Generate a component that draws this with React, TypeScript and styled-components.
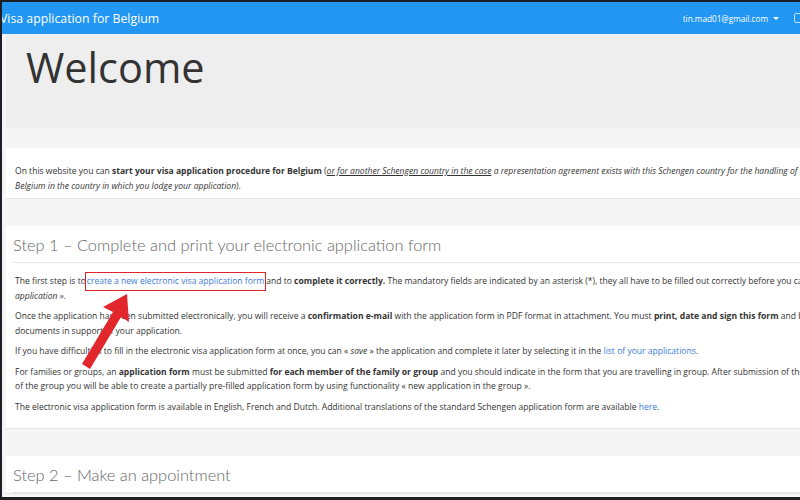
import styled, { createGlobalStyle } from 'styled-components';

const GlobalStyle = createGlobalStyle`
  html, body {
    margin: 0;
    padding: 0;
    overflow: hidden;
    background: #f5f5f5;
  }
  * {
    box-sizing: border-box;
  }
`;

const Frame = styled.div`
  position: relative;
  width: 800px;
  height: 500px;
  overflow: hidden;
  border-top: 2px solid #1d1f24;
  border-left: 2px solid #1d1f24;
  border-bottom: 3px solid #1d1f24;
  background: #f5f5f5;
  font-family: 'Open Sans', 'Liberation Sans', sans-serif;
`;

const NavBar = styled.header`
  height: 32px;
  background: #2196f3;
  display: flex;
  align-items: center;
  justify-content: space-between;
  color: #fff;
  width: 798px;
`;

const Brand = styled.span`
  font-size: 12.3px;
  margin-left: -2px;
`;

const NavRight = styled.div`
  display: flex;
  align-items: center;
  gap: 15px;
  margin-right: -6px;
`;

const UserMenu = styled.span`
  font-size: 8.2px;
  display: flex;
  align-items: center;
  gap: 5px;
`;

const Caret = styled.span`
  width: 0;
  height: 0;
  border-left: 3px solid transparent;
  border-right: 3px solid transparent;
  border-top: 3px solid #fff;
`;

const LangButton = styled.span`
  width: 12px;
  height: 10px;
  border: 1px solid rgba(255, 255, 255, 0.7);
  border-radius: 2px;
`;

const Content = styled.main`
  width: 1100px;
  padding-left: 4px;
`;

const Jumbotron = styled.section`
  height: 94px;
  background: #eeeeee;
  padding: 5px 20px 0;

  h1 {
    margin: 0;
    font-size: 41.5px;
    font-weight: 400;
    color: #333;
  }
`;

const Panel = styled.section<{ $top: number }>`
  margin-top: ${(p) => p.$top}px;
  background: #fff;
  border-bottom: 1px solid #e3e3e3;
  font-size: 8.55px;
  line-height: 14.5px;
  color: #333;
  white-space: nowrap;

  p {
    margin: 0 0 6px;
  }
  p:last-child {
    margin-bottom: 0;
  }
  a {
    color: #3b7bd8;
    text-decoration: none;
  }
`;

const IntroBody = styled.div`
  padding: 16px 9px 5px;

  u {
    text-decoration: underline;
  }
`;

const StepTitle = styled.h2`
  margin: 0 7px;
  padding: 9px 0 7px;
  font-family: Lato, 'Open Sans', sans-serif;
  font-weight: 300;
  font-size: 16.4px;
  line-height: 20px;
  color: #666;
  border-bottom: 1px solid #e6e6e6;
`;

const StepBody = styled.div`
  padding: 11px 9px 14px;
`;

const Boxed = styled.a`
  border: 1.6px solid #e0242a;
  padding: 2px 1px 3px;
  margin-left: -1px;
`;

const Arrow = styled.svg`
  position: absolute;
  left: 0;
  top: 0;
  pointer-events: none;
`;

export default function App() {
  return (
    <>
      <GlobalStyle />
      <Frame>
        <NavBar>
          <Brand>Visa application for Belgium</Brand>
          <NavRight>
            <UserMenu>
              tin.mad01@gmail.com <Caret />
            </UserMenu>
            <LangButton />
          </NavRight>
        </NavBar>
        <Content>
          <Jumbotron>
            <h1>Welcome</h1>
          </Jumbotron>
          <Panel $top={20}>
            <IntroBody>
              <p>
                On this website you can <b>start your visa application procedure for Belgium</b> (
                <i>
                  <u>or for another Schengen country in the case</u> a representation agreement exists
                  with this Schengen country for the handling of visa applications on behalf of
                  <br />
                  Belgium in the country in which you lodge your application
                </i>
                ).
              </p>
            </IntroBody>
          </Panel>
          <Panel $top={27}>
            <StepTitle>Step 1 – Complete and print your electronic application form</StepTitle>
            <StepBody>
              <p>
                The first step is to<Boxed href="#">create a new electronic visa application form</Boxed>
                and to <b>complete it correctly.</b> The mandatory fields are indicated by an asterisk
                (*), they all have to be filled out correctly before you can <i>« submit your visa</i>
                <br />
                <i>application »</i>.
              </p>
              <p>
                Once the application has been submitted electronically, you will receive a{' '}
                <b>confirmation e-mail</b> with the application form in PDF format in attachment. You
                must <b>print, date and sign this form</b> and bring it with you together with the
                <br />
                documents in support of your application.
              </p>
              <p>
                If you have difficulties to fill in the electronic visa application form at once, you
                can « <i>save</i> » the application and complete it later by selecting it in the{' '}
                <a href="#">list of your applications</a>.
              </p>
              <p>
                For families or groups, an <b>application form</b> must be submitted{' '}
                <b>for each member of the family or group</b> and you should indicate in the form that
                you are travelling in group. After submission of the first application form by a member
                <br />
                of the group you will be able to create a partially pre-filled application form by
                using functionality « new application in the group ».
              </p>
              <p>
                The electronic visa application form is available in English, French and Dutch.
                Additional translations of the standard Schengen application form are available{' '}
                <a href="#">here</a>.
              </p>
            </StepBody>
          </Panel>
          <Panel $top={27}>
            <StepTitle>Step 2 – Make an appointment</StepTitle>
          </Panel>
        </Content>
        <Arrow width="800" height="500" viewBox="0 0 800 500">
          <polygon
            fill="#e1262c"
            points="125,292 127,320 119,315 88,367 80,362 111,310 101,305"
          />
        </Arrow>
      </Frame>
    </>
  );
}
